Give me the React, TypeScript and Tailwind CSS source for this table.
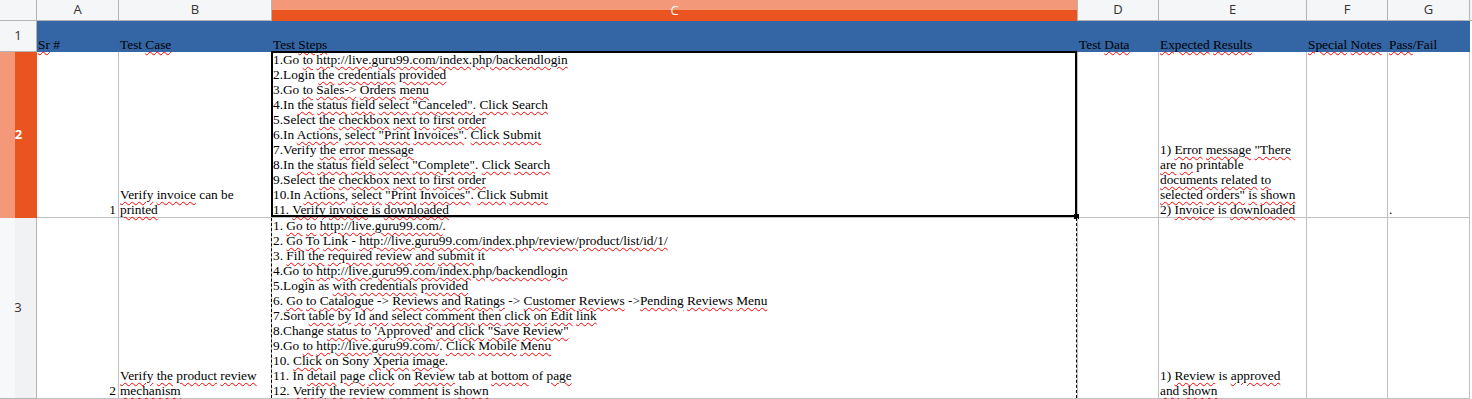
import React from "react";

const serif = "font-['Liberation_Serif',serif]";
const uiFont = "font-['Open_Sans','DejaVu_Sans',sans-serif]";

function T({ s }: { s: string }) {
  const parts = s.split(/(\[[^\]]+\])/);
  return (
    <>
      {parts.map((p, i) =>
        p.startsWith("[") && p.endsWith("]") ? (
          <span
            key={i}
            className="underline decoration-wavy decoration-[#ff0000] decoration-1 underline-offset-[2px]"
          >
            {p.slice(1, -1)}
          </span>
        ) : (
          <React.Fragment key={i}>{p}</React.Fragment>
        )
      )}
    </>
  );
}

function Lines({ lines, className = "" }: { lines: string[]; className?: string }) {
  return (
    <div className={`flex flex-col justify-end h-full pl-[1px] ${className}`}>
      {lines.map((l, i) => (
        <div key={i} className="whitespace-nowrap leading-[15px]">
          <T s={l} />
        </div>
      ))}
    </div>
  );
}

const grid = "border-r border-b border-[#c0c0c0]";
const hdr = `bg-[#f5f6f7] border-r border-b border-[#b4b4b4] flex items-center justify-center text-[13px] text-[#333] ${uiFont}`;

const row2C = [
  "1.Go [to] [http://live.guru99.com/index.php/backendlogin]",
  "2.Login [the] [credentials] [provided]",
  "3.Go [to] [Sales->] [Orders] [menu]",
  "4.In [the] [status] [field] [select] [\"Canceled\"]. [Click] [Search]",
  "5.Select [the] [checkbox] [next] [to] [first] [order]",
  "6.In [Actions], [select] [\"Print] [Invoices\"]. [Click] [Submit]",
  "7.Verify [the] [error] [message]",
  "8.In [the] [status] [field] [select] [\"Complete\"]. [Click] [Search]",
  "9.Select [the] [checkbox] [next] [to] [first] [order]",
  "10.In [Actions], [select] [\"Print] [Invoices\"]. [Click] [Submit]",
  "11. [Verify] [invoice] is [downloaded]",
];

const row3C = [
  "1. [Go] [to] [http://live.guru99.com/].",
  "2. [Go] [To] [Link] - [http://live.guru99.com/index.php/review/product/list/id/1/]",
  "3. [Fill] [the] [required] [review] [and] [submit] it",
  "4.Go [to] [http://live.guru99.com/index.php/backendlogin]",
  "5.Login as [with] [credentials] [provided]",
  "6. [Go] [to] [Catalogue] -> [Reviews] [and] [Ratings] -> [Customer] [Reviews] ->[Pending] [Reviews] [Menu]",
  "7.Sort [table] [by] [Id] [and] [select] [comment] [then] [click] [on] [Edit] [link]",
  "8.Change [status] [to] ['Approved'] [and] [click] [\"Save] [Review\"]",
  "9.Go [to] [http://live.guru99.com/]. [Click] [Mobile] [Menu]",
  "10. [Click] on Sony [Xperia] [image].",
  "11. In [detail] [page] [click] on [Review] tab at [bottom] of [page]",
  "12. [Verify] [the] [review] [comment] is [shown]",
];

export default function App() {
  return (
    <div
      className={`grid grid-cols-[37px_82px_153px_806px_81px_148px_81px_82px_2px] grid-rows-[21px_31px_166px_181px] w-[1472px] h-[399px] bg-white overflow-hidden text-[13.33px] text-black ${serif}`}
    >
      {/* Column header row */}
      <div className={hdr}></div>
      <div className={hdr}>A</div>
      <div className={hdr}>B</div>
      <div
        className={`flex items-center justify-center border-r border-[#b4b4b4] bg-[linear-gradient(to_bottom,#f4987a_0,#f4987a_10px,#e95420_10px)] text-white text-[13px] ${uiFont}`}
      >
        C
      </div>
      <div className={hdr}>D</div>
      <div className={hdr}>E</div>
      <div className={hdr}>F</div>
      <div className={hdr}>G</div>
      <div className="bg-[#f5f6f7] border-b border-[#b4b4b4]"></div>

      {/* Row 1 */}
      <div className={hdr}>1</div>
      {["[Sr] #", "Test [Case]", "Test [Steps]", "Test [Data]", "[Expected] [Results]", "[Special] [Notes]", "[Pass]/Fail"].map(
        (t, i) => (
          <div key={i} className="bg-[#3465a4]">
            <Lines lines={[t]} />
          </div>
        )
      )}
      <div className="bg-white"></div>

      {/* Row 2 */}
      <div
        className={`flex items-center justify-center bg-[linear-gradient(to_right,#f4987a_0,#f4987a_15px,#e95420_15px)] text-white font-bold text-[13px] ${uiFont}`}
      >
        2
      </div>
      <div className={`${grid} flex items-end justify-end pr-[2px]`}>
        <div className="leading-[15px]">1</div>
      </div>
      <div className={grid}>
        <Lines lines={["[Verify] [invoice] can be", "[printed]"]} />
      </div>
      <div className={`${grid} relative`}>
        <Lines lines={row2C} />
        <div className="absolute -left-px -top-px right-0 bottom-0 border-2 border-black pointer-events-none"></div>
        <div className="absolute -right-[2px] -bottom-[2px] w-[5px] h-[5px] bg-black"></div>
      </div>
      <div className={grid}></div>
      <div className={grid}>
        <Lines
          lines={[
            "1) [Error] [message] [\"There]",
            "[are] [no] printable",
            "[documents] [related] [to]",
            "[selected] [orders\"] [is] [shown]",
            "2) [Invoice] is [downloaded]",
          ]}
        />
      </div>
      <div className={grid}></div>
      <div className={grid}>
        <Lines lines={["."]} />
      </div>
      <div></div>

      {/* Row 3 */}
      <div
        className={`flex items-center justify-center bg-[linear-gradient(to_right,#f7f8f9_0,#f7f8f9_15px,#f1f2f4_15px)] border-r border-b border-[#b4b4b4] text-[13px] text-[#333] ${uiFont}`}
      >
        3
      </div>
      <div className={`${grid} flex items-end justify-end pr-[2px]`}>
        <div className="leading-[15px]">2</div>
      </div>
      <div className={grid}>
        <Lines lines={["[Verify] [the] [product] [review]", "[mechanism]"]} />
      </div>
      <div className={`${grid} relative`}>
        <Lines lines={row3C} />
        <div className="absolute -left-px top-0 bottom-0 border-l border-dashed border-black pointer-events-none"></div>
        <div className="absolute right-0 top-0 bottom-0 border-r border-dashed border-black pointer-events-none"></div>
      </div>
      <div className={grid}></div>
      <div className={grid}>
        <Lines lines={["1) [Review] is [approved]", "[and] [shown]"]} />
      </div>
      <div className={grid}></div>
      <div className={grid}></div>
      <div></div>
    </div>
  );
}
